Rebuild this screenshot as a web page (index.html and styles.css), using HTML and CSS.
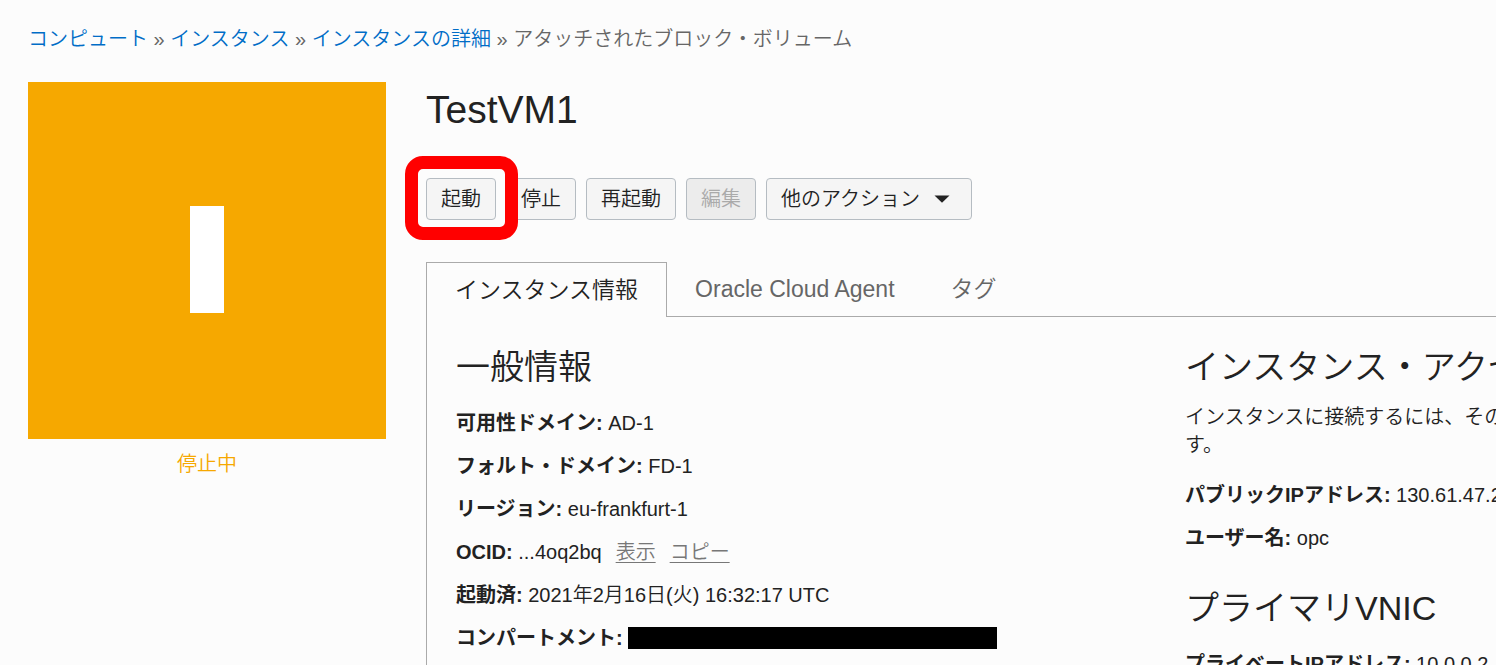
FILE: index.html
```html
<!DOCTYPE html>
<html lang="ja">
<head>
<meta charset="utf-8">
<meta name="viewport" content="width=device-width, initial-scale=1">
<title>TestVM1</title>
<link rel="stylesheet" href="styles.css">
</head>
<body>
<div class="page">
  <nav class="breadcrumb" aria-label="パンくず">
    <a href="#">コンピュート</a> » <a href="#">インスタンス</a> » <a href="#">インスタンスの詳細</a> » <span>アタッチされたブロック・ボリューム</span>
  </nav>
  <div class="layout">
    <aside class="status">
      <svg class="status-tile" viewBox="0 0 358 357" aria-hidden="true">
        <rect width="358" height="357" fill="#f6a800"/>
        <rect x="162" y="124" width="34" height="107" fill="#fff"/>
      </svg>
      <p class="status-label">停止中</p>
    </aside>
    <main class="main">
      <h1 class="title">TestVM1</h1>
      <div class="actions">
        <span class="highlighted"><button class="btn" type="button">起動</button></span>
        <button class="btn" type="button">停止</button>
        <button class="btn" type="button">再起動</button>
        <button class="btn" type="button" disabled>編集</button>
        <button class="btn btn-menu" type="button">他のアクション
          <svg class="caret" width="16" height="8" viewBox="0 0 16 8" aria-hidden="true"><path d="M0.5 0.5h15L8 7.8z" fill="#222"/></svg>
        </button>
      </div>
      <div class="tabs" role="tablist">
        <button class="tab tab-active" type="button" role="tab" aria-selected="true">インスタンス情報</button>
        <button class="tab" type="button" role="tab" aria-selected="false">Oracle Cloud Agent</button>
        <button class="tab" type="button" role="tab" aria-selected="false">タグ</button>
      </div>
      <div class="panel">
        <section class="column">
          <h2 class="heading">一般情報</h2>
          <p class="field"><b>可用性ドメイン:</b> AD-1</p>
          <p class="field"><b>フォルト・ドメイン:</b> FD-1</p>
          <p class="field"><b>リージョン:</b> eu-frankfurt-1</p>
          <p class="field"><b>OCID:</b> ...4oq2bq<a class="inline-link" href="#">表示</a><a class="inline-link" href="#">コピー</a></p>
          <p class="field"><b>起動済:</b> 2021年2月16日(火) 16:32:17 UTC</p>
          <p class="field"><b>コンパートメント:</b> <span class="redacted"></span></p>
        </section>
        <section class="column">
          <h2 class="heading">インスタンス・アクセス</h2>
          <p class="note">インスタンスに接続するには、その<br>す。</p>
          <p class="field"><b>パブリックIPアドレス:</b> 130.61.47.2</p>
          <p class="field"><b>ユーザー名:</b> opc</p>
          <h2 class="heading heading-next">プライマリVNIC</h2>
          <p class="field"><b>プライベートIPアドレス:</b> 10.0.0.2</p>
        </section>
      </div>
    </main>
  </div>
</div>
</body>
</html>
```

FILE: styles.css
```css
* {
  box-sizing: border-box;
}

body {
  margin: 0;
  overflow: hidden;
  background: #fcfcfc;
  color: #222;
  font-family: "Liberation Sans", "Noto Sans CJK JP", sans-serif;
  font-size: 20px;
  font-weight: 350;
  line-height: 28px;
}

h1, h2, p {
  margin: 0;
  font-weight: 350;
}

b {
  font-weight: 700;
}

button {
  font: inherit;
  color: inherit;
  white-space: nowrap;
}

.page {
  padding: 25px 0 0 28px;
}

.breadcrumb {
  color: #666;
}

.breadcrumb a {
  color: #006dc7;
  text-decoration: none;
}

.layout {
  display: flex;
  gap: 40px;
  margin-top: 29px;
}

.status {
  flex: 0 0 358px;
}

.status-tile {
  display: block;
  width: 100%;
}

.status-label {
  margin-top: 11px;
  color: #f6a800;
  text-align: center;
}

.main {
  flex: 1;
  min-width: 0;
}

.title {
  font-size: 39px;
  line-height: 56px;
}

.actions {
  display: flex;
  gap: 10px;
  margin-top: 40px;
}

.btn {
  height: 42px;
  padding: 0 14px;
  border: 1px solid #b5bcc2;
  border-radius: 4px;
  background: #f5f5f5;
}

.btn:disabled {
  background: #ececec;
  color: #aaa;
}

.btn-menu {
  display: flex;
  align-items: center;
  gap: 14px;
  padding-right: 21px;
}

.highlighted {
  position: relative;
  display: flex;
}

.highlighted::after {
  content: "";
  position: absolute;
  z-index: 1;
  inset: -22px -22px -20px -21px;
  border: 13px solid #f00;
  border-radius: 18px;
  pointer-events: none;
}

.tabs {
  display: flex;
  margin-top: 42px;
  border-bottom: 1px solid #aaa;
}

.tab {
  height: 54px;
  padding: 0 28px;
  border: 0;
  background: none;
  color: #666;
  font-size: 23px;
}

.tab-active {
  margin-bottom: -1px;
  height: 55px;
  border: 1px solid #aaa;
  border-bottom: 0;
  background: #fcfcfc;
  color: #222;
}

.panel {
  display: grid;
  grid-template-columns: minmax(0, 1fr) 311px;
  padding-left: 29px;
  padding-top: 28px;
  border-left: 1px solid #aaa;
}

.column {
  white-space: nowrap;
}

.heading {
  font-size: 34px;
  line-height: 44px;
  margin-bottom: 20px;
}

.heading-next {
  margin-top: 34px;
}

.field {
  margin-bottom: 15px;
}

.note {
  margin-top: -6px;
  margin-bottom: 22px;
}

.inline-link {
  margin-left: 14px;
  color: #777;
  text-decoration-thickness: 1px;
  text-underline-offset: 3px;
}

.redacted {
  display: inline-block;
  width: 369px;
  height: 22px;
  background: #000;
  vertical-align: -4px;
}
```
